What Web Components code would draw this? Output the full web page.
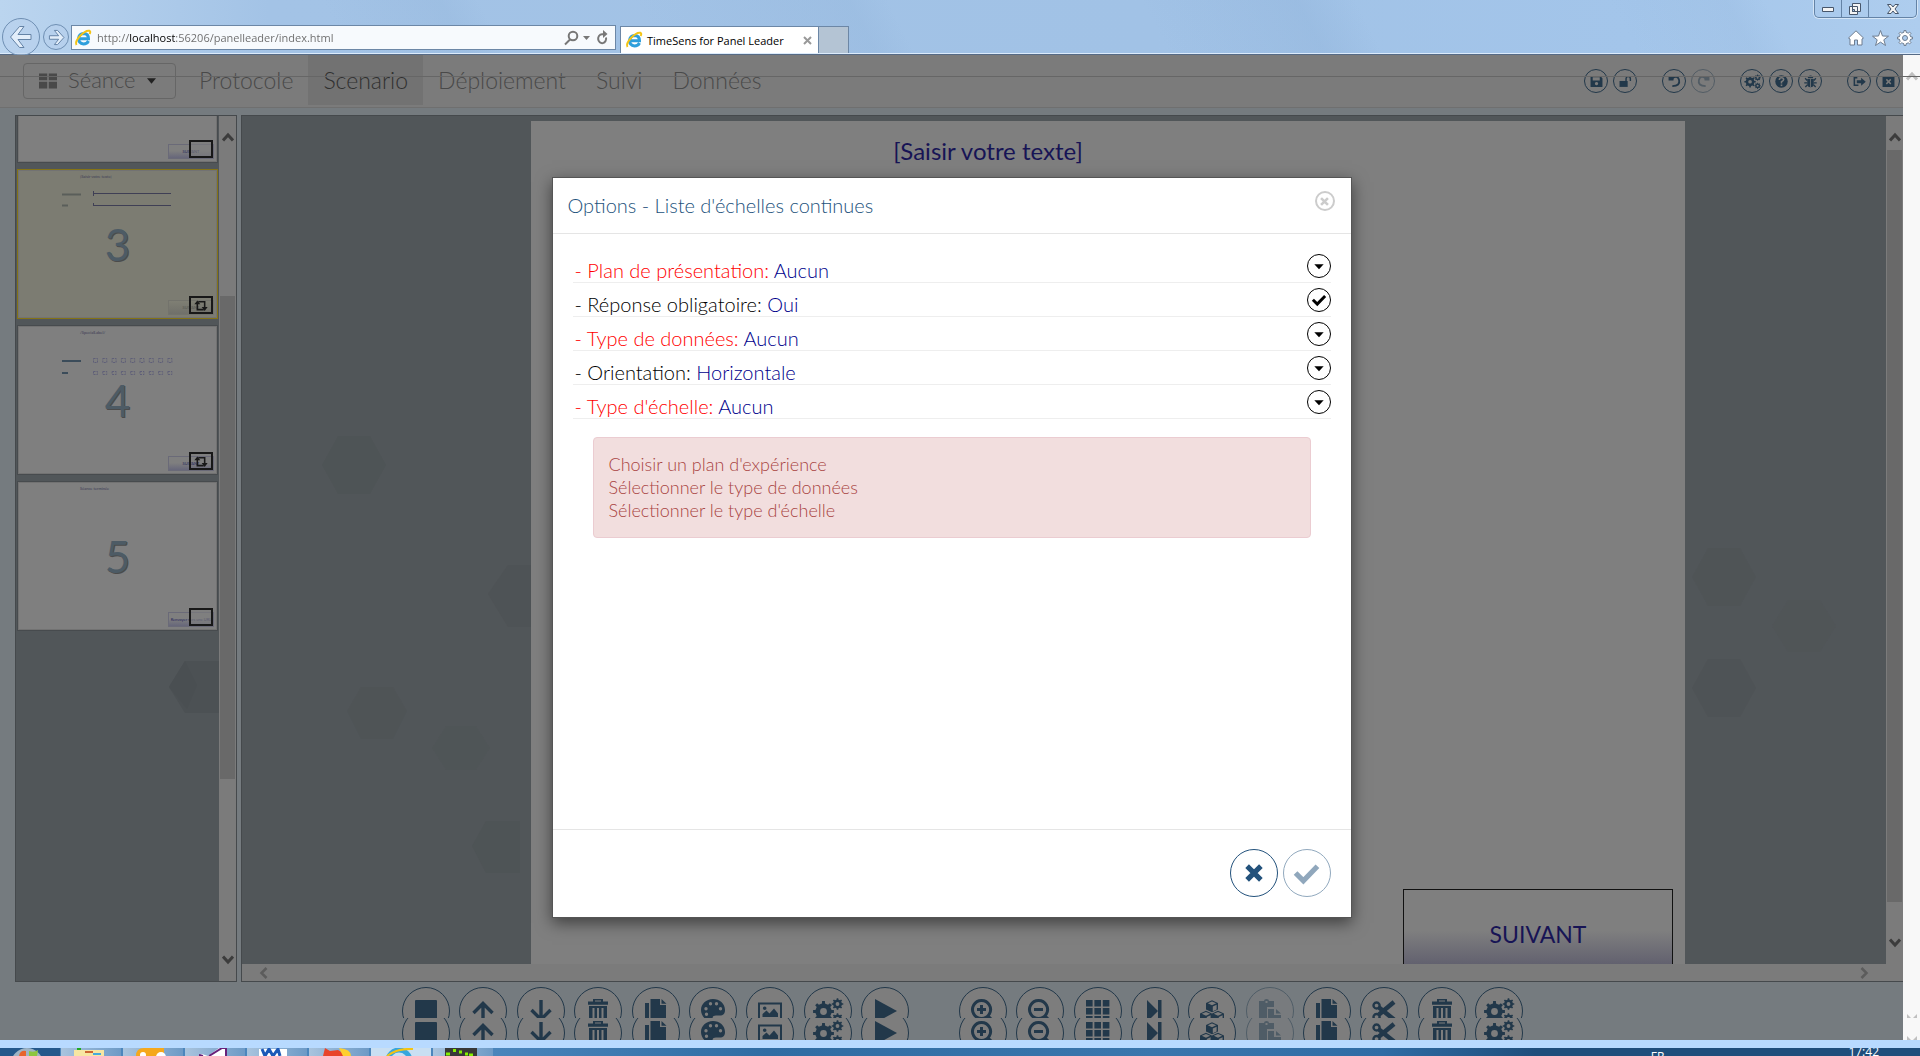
<!DOCTYPE html>
<html lang="fr">
<head>
<meta charset="utf-8">
<title>TimeSens for Panel Leader</title>
<style>
html,body{margin:0;height:100%;overflow:hidden;background:#757b7f}
body{font-family:Lato,"Open Sans",sans-serif}
</style>
</head>
<body>
<ts-desktop></ts-desktop>
<script>
function gear(cx,cy,r,hole,n){
  let d='';
  for(let i=0;i<n;i++){
    const a=i*2*Math.PI/n,s=Math.PI/n;
    [[-.95,.76],[-.48,.78],[-.34,1],[.34,1],[.48,.78]].forEach(([o,k],j)=>{
      const t=a+o*s;
      d+=(i||j?'L':'M')+(cx+Math.cos(t)*r*k).toFixed(2)+' '+(cy+Math.sin(t)*r*k).toFixed(2);
    });
  }
  d+='Z';
  return d+`M${cx-hole} ${cy}a${hole} ${hole} 0 1 0 ${2*hole} 0a${hole} ${hole} 0 1 0 ${-2*hole} 0Z`;
}
const line=(d,w=3)=>`<path d="${d}" fill="none" stroke="currentColor" stroke-width="${w}"/>`;
const fill=d=>`<path d="${d}" fill="currentColor" fill-rule="evenodd"/>`;
let cells='';
for(let y=0;y<3;y++)for(let x=0;x<3;x++)cells+=`M${x*8.4} ${1+y*8}h6.6v6.4h-6.6z`;
const cube=(x,y)=>`M${x} ${y}l6 -2.8 6 2.8v6.4l-6 2.8 -6 -2.8zM${x+1.8} ${y+.3}l4.2 1.9 4.2 -1.9 -4.2 -1.9zM${x+6.8} ${y+3.6}v4.6l3.8 -1.8v-4.6z`;
const ICONS={
  square:fill('M1 2q0-1 1-1h20q1 0 1 1v20q0 1-1 1h-20q-1 0-1-1z'),
  up:line('M12 24V4M2.5 14 12 4.500 21.500 14',3.4),
  down:line('M12 1V21M2.500 11 12 20.500 21.500 11',3.4),
  trash:fill('M7 0h10v2.500h5v3.200H2V2.500h5zM9 1.400v1.100h6v-1.100zM3 7h18v17H3zM6.500 9v13h2v-13zM11 9v13h2v-13zM15.500 9v13h2v-13z'),
  copy:fill('M1 4h4v20H1zM6.500 0h9.500v6h6v18H6.500zM17.500 0l5 4.800h-5z'),
  palette:fill('M12 0C5 0 0 5 0 11s5 11 10.500 12c2 .3 2.500-1.500 1.500-3-1.200-2 .5-3.500 3-3.500h4c3 0 5-1.500 5-5.500C24 4.500 18.500 0 12 0zM5 8a1.700 1.700 0 1 1 0 3.400A1.700 1.700 0 1 1 5 8zM9.500 3a1.700 1.700 0 1 1 0 3.400 1.700 1.700 0 1 1 0-3.400zM15.500 3a1.700 1.700 0 1 1 0 3.400 1.700 1.700 0 1 1 0-3.400zM19.500 8a1.700 1.700 0 1 1 0 3.400 1.700 1.700 0 1 1 0-3.400zM5.500 13.500a1.700 1.700 0 1 1 0 3.400 1.700 1.700 0 1 1 0-3.400z'),
  image:line('M1 4.500h22v16H1z',2)+fill('M4.500 18v-3l4-3.500 3 3 4.500-5 4 5V18zM6.700 7.500a1.800 1.800 0 1 1 0 3.600 1.800 1.800 0 1 1 0-3.600z'),
  gears:fill(gear(7.5,12.5,10.5,3.4,8)+gear(21.500,5,5.800,1.900,8)+gear(21.500,20,5.800,1.900,8)),
  play:fill('M2 0 24 12 2 24z'),
  zoomin:line('M10.500 1.500a9 9 0 1 0 .1 0zM16.500 16.500 23 23M10.500 6v9M6 10.500h9',3),
  zoomout:line('M10.500 1.500a9 9 0 1 0 .1 0zM16.500 16.500 23 23M6 10.500h9',3),
  grid:fill(cells),
  next:fill('M4 1 15 12V1h3.500v22H15V12L4 23z'),
  cubes:fill(cube(6,4)+cube(0,14.500)+cube(12,14.500)),
  paste:fill('M1 2h5q0-2 2.500-2T11 2h5v6H9v14H1zM7.500 2v2h2v-2zM10 10h6v6h7v8H10zM18 10l5 4.500h-5z'),
  cut:line('M4.500 3.500a3 3 0 1 0 .1 0zM4.500 15a3 3 0 1 0 .1 0z',2.400)+line('M7 15.500 22 3',4.500)+line('M7 8.500 22 20.500',4.500),
  save:fill('M1 3q0-1 1-1h17l4 4v15q0 1-1 1H2q-1 0-1-1zM5 4v6h13V4zM12 13a3 3 0 1 0 .1 0z'),
  unlock:fill('M1 11h15v11H1z')+line('M13 12V7q0-4 4-4t4 4v4',2.600),
  undo:line('M6 6.500Q18-1 20.500 9.500T8 20.500',3.400)+fill('M1 2l10 1-1 7H1z'),
  redo:line('M18 6.500Q6-1 3.500 9.500T16 20.500',3.400)+fill('M23 2l-10 1 1 7h9z'),
  help:'<circle cx="12" cy="12" r="11.500" fill="currentColor"/><path d="M8 9q0-4 4-4t4 3.500q0 2-4 4v3" fill="none" stroke="#7b7b7b" stroke-width="3"/><path d="M10.500 17.500h3v3h-3z" fill="#7b7b7b"/>',
  bug:fill('M7 6q0-5 5-5t5 5zM6 7.500h5.300V22h1.400V7.500H18v9q0 6-6 6t-6-6z')+line('M6 10 2 6M6 14.500H.5M6.500 18 2.500 22M18 10l4-4M18 14.500h5.500M17.500 18l4 4',2.400),
  exit:line('M8 5H2.500v14H10',2.800)+fill('M7 9.500h8V5l8.500 7.500L15 20v-5H7z'),
  winclose:fill('M1 2h22v20H1zM7 9l3 3.200L7 15.500l2 2 3.200-3 3 3 2-2-3-3.300 3-3.200-2-2-3 3-3.200-3z'),
  tiles:fill('M0 2h11v9H0zM13 2h11v9H13zM0 13h11v9H0zM13 13h11v9H13z'),
  cross:line('M4.500 4.500l15 15M19.500 4.500l-15 15',5.600),
  check:line('M1.500 11.500l7.500 7.500L22.500 5',5),
  caret:fill('M5 9.500h14L12 17z'),
  loop:line('M18 21H4V8M6 4h14v13',3.400)+fill('M4 1l6.500 8.500H-2.500zM20 24l6.500-8.500h-13z')
};
class Base extends HTMLElement{
  connectedCallback(){
    if(this.shadowRoot)return;
    const t=document.createElement('template');
    t.innerHTML='<style>*{box-sizing:border-box}button,input{font:inherit;color:inherit;margin:0}button{padding:0}'+this.css()+'</style>'+this.html();
    this.attachShadow({mode:'open'}).append(t.content.cloneNode(true));
  }
  css(){return ':host{display:block}'}
  html(){return '<slot></slot>'}
}
const def=(n,css,html)=>customElements.define(n,class extends Base{
  css(){return css}
  html(){return typeof html==='function'?html(this):html}
});

def('ts-icon',':host{display:block;width:24px;height:24px;flex:none}svg{display:block;width:100%;height:100%;overflow:visible}',
  e=>`<svg viewBox="0 0 24 24" aria-hidden="true">${ICONS[e.getAttribute('name')]}</svg>`);

def('ts-round',`:host{display:block;flex:none;width:var(--d,24px);height:var(--d,24px)}
button{display:flex;align-items:center;justify-content:center;width:100%;height:100%;border-radius:50%;border:var(--bw,1px) solid currentColor;background:var(--fill,transparent)}
ts-icon{width:var(--i,13px);height:var(--i,13px)}`,
  e=>`<button type="button" aria-label="${e.getAttribute('label')||e.getAttribute('name')}"><ts-icon name="${e.getAttribute('name')}"></ts-icon></button>`);

def('ie-logo',':host{display:block;flex:none;width:16px;height:16px}svg{display:block;overflow:visible}',
 `<svg width="16" height="16" viewBox="0 0 16 16" aria-hidden="true"><path d="M13.500 11Q12 14 8.500 14 3.500 13.500 3.500 8.600 4 3.600 8.700 3.500 13.500 3.800 13.500 8.700H5" fill="none" stroke="#2e9fdc" stroke-width="3"/><path d="M1.500 15Q-.5 12 5 6T14.500.8Q16 1.500 14.500 4" fill="none" stroke="#f4c414" stroke-width="2"/></svg>`);

def('browser-bar',`:host{display:flex;align-items:flex-end;height:55px;flex:none;position:relative;border-bottom:1px solid #566b86;box-shadow:inset 0 -1px #dcebfb;
font:11px "Open Sans",sans-serif;padding:0 17px 1px 2px;
background:linear-gradient(62deg,transparent 18%,#90b3d944 24%,transparent 26%,transparent 34%,#90b3d944 45%,transparent 47%,transparent 60%,#8db0d755 68%,transparent 71%,transparent 84%,#90b3d933 90%,transparent 92%),linear-gradient(90deg,#bbd5ef,#a3c3e6 14%,#a1c2e6 60%,#a3c5ea 85%,#aecdee)}
.nav{display:flex;align-items:center;gap:3px;width:69px;height:32px;flex:none}
.nav button{border:1px solid #6f8fb3;border-radius:50%;background:#b8d1ec88;color:#eaf2fb;display:flex;align-items:center;justify-content:center}
.b{width:38px;height:38px}.f{width:26px;height:26px}
.url{display:flex;align-items:center;width:545px;height:25px;border:1px solid #6c87a6;background:#f7fafd;padding:0 5px 0 3px;gap:6px;margin-bottom:3px}
.url input{flex:1;min-width:0;border:0;outline:0;padding:0;height:20px;color:transparent;background:linear-gradient(90deg,#6a6a6a 32px,#000 32px 78px,#6a6a6a 78px);-webkit-background-clip:text;background-clip:text}
.tabs{display:flex;margin-left:4px;height:27px}
.tab{display:flex;align-items:center;gap:5px;width:199px;padding:0 6px 0 5px;background:#fff;border:1px solid #6c87a6;border-bottom:0;color:#000}
.tab span{flex:1;white-space:nowrap}
.tab button{border:0;background:none;color:#999}
.new{width:30px;height:27px;background:#b4c4d4;border:1px solid #6c87a6;border-left:0;border-bottom:0}
.tools{display:flex;gap:8px;margin-left:auto;height:30px;align-items:center;margin-right:-10px}
.tools button{border:0;background:none}
svg{display:block}
.win{position:absolute;right:3px;top:0;display:flex;height:18px;border:1px solid #6483a6;border-top:0;border-radius:0 0 5px 5px;box-shadow:0 0 0 1px #d4e5f7}
.win button{width:27px;border:0;border-right:1px solid #6483a6;background:none;display:flex;align-items:center;justify-content:center}
.win button:last-child{width:47px;border:0}`,
`<div class="nav"><button class="b" aria-label="Précédent"><svg width="24" height="24" viewBox="0 0 24 24"><path d="M10.500 1.500h4.500L9 9.500h13v5H9l6 8h-4.500L1.500 12z" fill="#e3eefa" stroke="#6483a6"/></svg></button><button class="f" aria-label="Suivant"><svg width="17" height="17" viewBox="0 0 24 24"><path d="M13.500 2H9l6 7.500H2v5h13L9 22h4.500l9-10z" fill="#e3eefa" stroke="#6483a6" stroke-width="1.400"/></svg></button></div>
<div class="url"><ie-logo></ie-logo><input aria-label="Adresse" value="http://localhost:56206/panelleader/index.html">
<svg width="46" height="16" viewBox="0 0 46 16" fill="none" stroke="#777" stroke-width="2"><circle cx="9" cy="6" r="4.300"/><path d="M6 9.500 1 14.500"/><path d="M19 6h7l-3.500 4z" fill="#777" stroke="none"/><path d="M42 7.500A4 4.500 0 1 1 38 4.200h2"/><path d="M39 0 43.500 4l-4.500 4z" fill="#777" stroke="none"/></svg></div>
<div class="tabs"><div class="tab"><ie-logo></ie-logo><span>TimeSens for Panel Leader</span><button aria-label="Fermer l'onglet"><svg width="9" height="9" viewBox="0 0 9 9"><path d="M1 1l7 7M8 1 1 8" stroke="#999" stroke-width="2"/></svg></button></div><button class="new" aria-label="Nouvel onglet"></button></div>
<div class="tools"><button aria-label="Accueil"><svg width="16" height="16" viewBox="0 0 16 16"><path d="M8 .8 15.500 8l-1.500 1v6H9.500v-5h-3v5H2V9L.5 8z" fill="#fff" stroke="#6e7d90"/></svg></button><button aria-label="Favoris"><svg width="17" height="16" viewBox="0 0 17 16"><path d="M8.500.5l2 5.500 6 .2-4.700 3.600L13.500 15.500l-5-3.400-5 3.400 1.700-5.700L.5 6.200l6-.2z" fill="#fff" stroke="#6e7d90"/></svg></button><button aria-label="Outils"><svg width="16" height="16" viewBox="0 0 16 16"><path d="${gear(8,8,7.5,2.5,8)}" fill="#fff" fill-rule="evenodd" stroke="#6e7d90"/></svg></button></div>
<div class="win"><button aria-label="Réduire"><svg width="12" height="6" viewBox="0 0 12 6"><path d="M.5 1.500h11v4H.5z" fill="#f4f4f4" stroke="#47566b"/></svg></button><button aria-label="Restaurer"><svg width="12" height="12" viewBox="0 0 12 12"><path d="M3.500.5h8v8h-8zM.5 3.500h8v8h-8z" fill="#f4f4f4" stroke="#47566b"/><path d="M3.500 6.500h2v2h-2z" fill="#a8c8ea" stroke="#47566b"/></svg></button><button aria-label="Fermer"><svg width="12" height="10" viewBox="0 0 12 10"><path d="M.5.500h3.500l2 2.500 2-2.500h3.500L8 5l3.500 4.500H8L6 7 4 9.500H.5L4 5z" fill="#f4f4f4" stroke="#47566b"/></svg></button></div>`);

def('app-header',`:host{display:flex;align-items:center;height:53px;flex:none;background:#7b7b7b;border-bottom:1px solid #6f6f6f;padding:0 3px 0 23px;color:#494949;font-size:23px;line-height:26px;font-weight:300}
.menu{display:flex;align-items:center;gap:11px;width:153px;height:36px;border:1px solid #666;border-radius:4px;background:none;padding:0 15px;font-size:22px;line-height:26px;white-space:nowrap}
.menu span{margin-top:-3px}
.menu ts-icon{width:18px;height:18px}
nav{display:flex;align-self:stretch;margin-left:8px;margin-bottom:2px}
a{display:flex;align-items:center;padding:0 15px;color:inherit;text-decoration:none}
a.on{background:#727272;color:#303030}
.acts{display:flex;margin-left:auto;gap:25px;color:#22384a}
.acts div{display:flex;gap:5px}
.off{opacity:.45}`,
`<button class="menu"><ts-icon name="tiles"></ts-icon><span>Séance</span><svg width="9" height="6" viewBox="0 0 10 6" aria-hidden="true"><path d="M0 0h10L5 6z" fill="#222"/></svg></button>
<nav><a href="#">Protocole</a><a href="#" class="on">Scenario</a><a href="#">Déploiement</a><a href="#">Suivi</a><a href="#">Données</a></nav>
<div class="acts"><div><ts-round name="save"></ts-round><ts-round name="unlock"></ts-round></div><div><ts-round name="undo"></ts-round><ts-round name="redo" class="off"></ts-round></div><div><ts-round name="gears"></ts-round><ts-round name="help"></ts-round><ts-round name="bug"></ts-round></div><div><ts-round name="exit"></ts-round><ts-round name="winclose"></ts-round></div></div>`);

def('v-scroll',`:host{display:flex;flex-direction:column;width:17px;flex:none;background:#7b7b7b;color:#3c3c3c}
svg{display:block;margin:0 auto;flex:none}.a{margin-top:16px}.b{margin-bottom:16px}
.track{flex:1;display:flex;flex-direction:column;margin:8px 1px 8px}
.thumb{background:#696969}`,
e=>`<svg class="a" width="12" height="10" viewBox="0 0 12 10"><path d="M1 8.500 6 3l5 5.500" fill="none" stroke="currentColor" stroke-width="3"/></svg><div class="track"><div style="flex:${e.getAttribute('before')}"></div><div class="thumb" style="flex:${e.getAttribute('size')}"></div><div style="flex:${e.getAttribute('after')}"></div></div><svg class="b" width="12" height="10" viewBox="0 0 12 10"><path d="M1 1.500 6 7l5-5.500" fill="none" stroke="currentColor" stroke-width="3"/></svg>`);

def('slide-thumb',`:host{display:flex;align-items:center;justify-content:center;position:relative;height:150px;flex:none;background:#7f7f7f;border:1px solid #474b4e;box-shadow:inset 0 0 0 1px #727272;color:#4d5b65;font:44px/48px Lato,sans-serif;text-shadow:1px 1px #4b4b4b}
:host([on]){background:#7c7c72;border:1px solid #847315}
slot{display:block}
.cap{position:absolute;left:62px;top:4px;font-size:4px;line-height:6px;color:#3c3c55;text-shadow:none;white-space:nowrap}
.btn{position:absolute;right:3px;bottom:3px;width:46px;height:15px;border:1px solid #6a6a78;background:linear-gradient(#7f7f7f 45%,#66667a);font-size:4px;line-height:13px;color:#25255a;text-align:center;text-shadow:none;white-space:nowrap}
:host([on]) .btn{background:linear-gradient(#7f7f74,#70706a);border-color:#73736c;color:#55554f}
.badge{position:absolute;right:4px;bottom:4px;width:24px;height:18px;border:2px solid #181818;display:flex;align-items:center;justify-content:center;color:#181818}
.badge.empty{background:#7f7f7f99}
.badge ts-icon{width:12px;height:11px}
svg{position:absolute;left:0;top:0}`,
e=>{const k=e.getAttribute('kind');let s='';
 if(k==='line')s='<path d="M75 23.500h78M75 35.500h78M75.500 21v5M75.500 33v3" stroke="#3f3f55" fill="none"/><path d="M44 24.500h19M44 35.500h6" stroke="#5a5e5a" stroke-width="2"/>';
 if(k==='box'){for(let i=0;i<9;i++)s+=`<path d="M${75.5+i*9.300} 32.500h4v4h-4zM${75.500+i*9.300} 45.500h4v3h-4z" stroke="#5f5f78" fill="none" stroke-dasharray="2 1"/>`;s+='<path d="M44 35h19M44 47h6" stroke="#3b4c5a" stroke-width="2"/>';}
 return `<svg width="198" height="148" viewBox="0 0 198 148" aria-hidden="true">${s}</svg><span class="cap">${e.getAttribute('cap')||''}</span><span class="btn">${e.getAttribute('btn')}</span><slot></slot><div class="badge ${k?'':'empty'}">${k?'<ts-icon name="loop"></ts-icon>':''}</div>`;});

def('slide-list',`:host{display:flex;width:222px;flex:none;border:1px solid #45494c;background:#515659;overflow:hidden}
.list{flex:1;display:flex;flex-direction:column;gap:6px;padding:0 1px;overflow:hidden;position:relative}
slide-thumb:first-of-type{margin-top:-103px}
.hex{position:absolute;left:151px;top:543px}`,
`<div class="list"><svg class="hex" width="60" height="60" viewBox="0 0 60 60" aria-hidden="true"><path d="M2 28 18 2h44v52H18z" fill="#4c5154"/><path d="M2 28 18 2l12 24-10 24z" fill="#4a4f52"/></svg>
<slide-thumb btn="SUIVANT"></slide-thumb><slide-thumb on kind="line" cap="[Saisir votre texte]" btn="SUIVANT">3</slide-thumb><slide-thumb kind="box" cap="/SpecialLabel/" btn="SUIVANT">4</slide-thumb><slide-thumb cap="Séance terminée" btn="Renvoyer vers une URL">5</slide-thumb></div>
<v-scroll before="146" size="483" after="168"></v-scroll>`);

def('slide-stage',`:host{display:flex;flex:1;min-width:0;border:1px solid #45494c;border-right:0;background:#515659}
.col{flex:1;display:flex;flex-direction:column;min-width:0;position:relative}
.view{flex:1;display:flex;padding:5px 201px 0 289px;position:relative;min-height:0}
.hex{position:absolute;inset:0;width:100%;height:100%}
.slide{flex:1;position:relative;background:#7f7f7f;display:flex;flex-direction:column;align-items:center;justify-content:space-between;color:#171455;font-size:24px;line-height:30px;padding:15px 12px 0}
.slide p{margin:0;align-self:center;padding-right:240px}
.slide button{align-self:flex-end;width:270px;height:75px;border:1px solid #111;border-bottom:0;background:linear-gradient(#7f7f7f 55%,#62616f);padding-top:14px;font-size:23px}
.h{display:flex;justify-content:space-between;align-items:center;height:17px;background:#7b7b7b;padding:0 17px}
.bar{display:flex;background:#7b7b7b;padding-bottom:17px}`,
`<div class="col"><div class="view"><svg class="hex" aria-hidden="true" fill="#4a4e51"><path d="M80 349l16-29h32l16 29-16 29H96z" opacity=".3"/><path d="M246 478l20-29h34v62h-34z" opacity=".35"/><path d="M105 595l14-24h32l14 24-14 28h-32z" opacity=".25"/><path d="M230 730l14-25h34v52h-34z" opacity=".3"/><path d="M190 632l14-22h30l14 22-14 22h-30z" opacity=".15"/><path d="M1450 461l16-29h32l16 29-16 29h-32z" opacity=".25"/><path d="M1450 572l16-29h32l16 29-16 29h-32z" opacity=".35"/><path d="M1530 510l16-26h32l16 26-16 26h-32z" opacity=".1"/></svg>
<div class="slide"><p>[Saisir votre texte]</p><button>SUIVANT</button></div></div>
<div class="h"><svg width="9" height="12" viewBox="0 0 9 12"><path d="M7.500 1 2.500 6l5 5" fill="none" stroke="#5c5c5c" stroke-width="2.500"/></svg><svg width="9" height="12" viewBox="0 0 9 12"><path d="M1.500 1 6.500 6l-5 5" fill="none" stroke="#5c5c5c" stroke-width="2.500"/></svg></div></div>
<div class="bar"><v-scroll before="0" size="752" after="28"></v-scroll></div>`);

const set1=['square','up','down','trash','copy','palette','image','gears','play'],set2=['zoomin','zoomout','grid','next','cubes','paste','copy','cut','trash','gears'];
const round=n=>`<ts-round name="${n}" class="${n==='paste'?'off':''}"></ts-round>`;
const strip=c=>`<div class="strip ${c}"><div class="g g1">${set1.map(round).join('')}</div><div class="g g2">${set2.map(round).join('')}</div></div>`;
def('tool-strip',`:host{display:block;flex:none;padding:5px 0 0 22px;color:#22384a}
.strip{display:flex;justify-content:center;gap:50px;overflow:hidden;height:31px}
.again{height:22px}.again .g{margin-top:-9px}
.g{display:flex;justify-content:space-between}.g1{width:507px}.g2{width:564px}
ts-round{--d:48px;--i:24px;--fill:#7d7d7d}.off{opacity:.45}`,strip('')+strip('again'));

def('option-row',`:host{display:flex;height:34px;border-bottom:1px solid #eee;font-size:20px;line-height:24px;color:#000;justify-content:space-between}
.t{align-self:flex-end;padding-left:2px}
:host([missing]) .n{color:red}.v{color:#00008b}
.c{--i:16px;margin-top:5px}
label{display:grid;place-items:center;width:24px;height:24px;margin-top:5px}
label>*{grid-area:1/1}
input{appearance:none;width:24px;height:24px;border:1px solid #000;border-radius:50%}
label ts-icon{width:14px;height:14px;pointer-events:none}`,
e=>{const n=e.getAttribute('name'),c=e.hasAttribute('checked');
return `<div class="t"><span class="n">- ${n}:</span> <span class="v"><slot></slot></span></div>${c?`<label><input type="checkbox" checked aria-label="${n}"><ts-icon name="check"></ts-icon></label>`:`<ts-round class="c" name="caret" label="${n}"></ts-round>`}`});

def('options-dialog',`:host{display:flex;flex-direction:column;width:800px;height:741px;background:#fff;border:1px solid #555;box-shadow:0 5px 15px rgba(0,0,0,.5);background-clip:padding-box;font-weight:300}
header{display:flex;justify-content:space-between;height:56px;border-bottom:1px solid #e5e5e5;padding:13px 16px 0 15px}
h1{margin:0;font-size:20px;line-height:28px;font-weight:300;color:#23527c}
.x{--d:20px;--i:11px;--bw:2px;color:#ccc}
main{flex:1;padding:15px 20px}
.alert{margin:18px 20px 0;padding:15px;border:1px solid #ebccd1;border-radius:4px;background:#f2dede;color:#a94442;font-size:18px;line-height:23px}
.alert p{margin:0}
footer{display:flex;justify-content:flex-end;gap:5px;height:88px;border-top:1px solid #e5e5e5;padding:19px 20px 0;color:#23527c}
footer ts-round{--d:48px;--i:22px}footer .off{--i:25px;opacity:.5}`,
`<header><h1>Options - Liste d'échelles continues</h1><ts-round class="x" name="cross" label="Fermer"></ts-round></header>
<main><option-row missing name="Plan de présentation">Aucun</option-row><option-row name="Réponse obligatoire" checked>Oui</option-row><option-row missing name="Type de données">Aucun</option-row><option-row name="Orientation">Horizontale</option-row><option-row missing name="Type d'échelle">Aucun</option-row>
<div class="alert" role="alert"><p>Choisir un plan d'expérience</p><p>Sélectionner le type de données</p><p>Sélectionner le type d'échelle</p></div></main>
<footer><ts-round name="cross" label="Annuler"></ts-round><ts-round name="check" label="Valider" class="off"></ts-round></footer>`);

def('task-bar',`:host{display:flex;height:8px;flex:none;overflow:hidden;background:linear-gradient(90deg,#4b86bd 25%,#2f6ca3 40%,#3a76ad 60%,#2f6ca5 72%,#1f4e7c 80%);color:#fff;font:12px/14px "Open Sans",sans-serif;justify-content:space-between}
.l{display:flex}.l svg{display:block;width:60px;height:8px;margin-right:2px;background:linear-gradient(90deg,#a9c4de,#6d9ac6)}
.l svg:first-child{background:#24588b;margin-right:1px}.l svg:nth-child(7){background:#c9dff2}
.r{display:flex;gap:184px;padding-right:41px}.r span:first-child{padding-top:2px}.r time{margin-top:-3px}`,
`<div class="l"><svg viewBox="0 0 60 8"><circle cx="27" cy="16" r="16" fill="#9fb4c4"/><path d="M19 8q1-6 7-5v5z" fill="#e8642c"/><path d="M29 3q5 2 9-1l-1 6h-8z" fill="#8cc63f"/></svg><svg viewBox="0 0 60 8"><path d="M13 2h30v6H13z" fill="#f7e6a2"/><path d="M16 0h4v2h-4z" fill="#2a2"/><path d="M24 3h8v2h-8z" fill="#c63"/><path d="M32 5h8v2h-8z" fill="#4ad"/></svg><svg viewBox="0 0 60 8"><path d="M13 8q0-8 8-8h20v8z" fill="#f5a81c"/><circle cx="20" cy="7" r="3" fill="#fff"/><circle cx="38" cy="9" r="5" fill="#fff"/></svg><svg viewBox="0 0 60 8"><path d="M13 8l4-2 6 2L34 0h8v8z" fill="#fff"/><path d="M14 7l4 1M24 8l13-8h4v8" stroke="#68217a" stroke-width="2" fill="none"/></svg><svg viewBox="0 0 60 8"><path d="M12 1h28v7H12z" fill="#fff"/><path d="M15 1l3 7 4-7 4 7 5-7 2 7" stroke="#1c59b8" stroke-width="3" fill="none"/></svg><svg viewBox="0 0 60 8"><path d="M14 8l2-8 5 3 8-1 10 6z" fill="#e8442a"/><path d="M30 0q12 1 12 8h-8z" fill="#ffcf2e"/></svg><svg viewBox="0 0 60 8"><circle cx="28" cy="13" r="11" fill="none" stroke="#37a6de" stroke-width="5"/><path d="M16 8Q26 0 42 1" stroke="#f4c414" stroke-width="2" fill="none"/></svg><svg viewBox="0 0 60 8"><path d="M12 0h32v8H12z" fill="#383838"/><path d="M13 6h4M20 2.500h3M26 4h3M32 6h3M36 7h4" stroke="#84f000" stroke-width="3"/></svg></div>
<div class="r"><span>FR</span><time>17:42</time></div>`);

def('ts-desktop',`:host{display:flex;flex-direction:column;height:100vh;overflow:hidden}
.page{flex:1;display:flex;min-height:0;position:relative}
.app{flex:1;display:flex;flex-direction:column;min-width:0;position:relative}
.work{flex:1;display:flex;gap:4px;min-height:0;padding:7px 0 0 15px}
.modal{position:absolute;inset:0;display:flex;justify-content:center;align-items:flex-start;padding-top:122px}
.seam{position:absolute;left:0;right:0;top:21px;height:1px;background:#666}
.outer{width:17px;background:#f8f8f8;display:flex;flex-direction:column;justify-content:space-between;align-items:center;padding:16px 0 0}
.band{height:8px;background:#b8daff;flex:none}
svg{display:block}`,
`<browser-bar></browser-bar>
<div class="page"><div class="app"><app-header></app-header><div class="work"><slide-list></slide-list><slide-stage></slide-stage></div><tool-strip></tool-strip><div class="modal"><options-dialog></options-dialog></div></div>
<div class="outer"><svg width="12" height="10" viewBox="0 0 12 10"><path d="M1 8.500 6 3l5 5.500" fill="none" stroke="#c0c0c0" stroke-width="3"/></svg><svg width="12" height="26" viewBox="0 0 12 26"><path d="M1 0v4h4zM11 0v4H7zM1 22v4h4zM11 22v4H7z" fill="#c0c0c0"/></svg></div><div class="seam"></div></div>
<div class="band"></div><task-bar></task-bar>`);
</script>
</body>
</html>
